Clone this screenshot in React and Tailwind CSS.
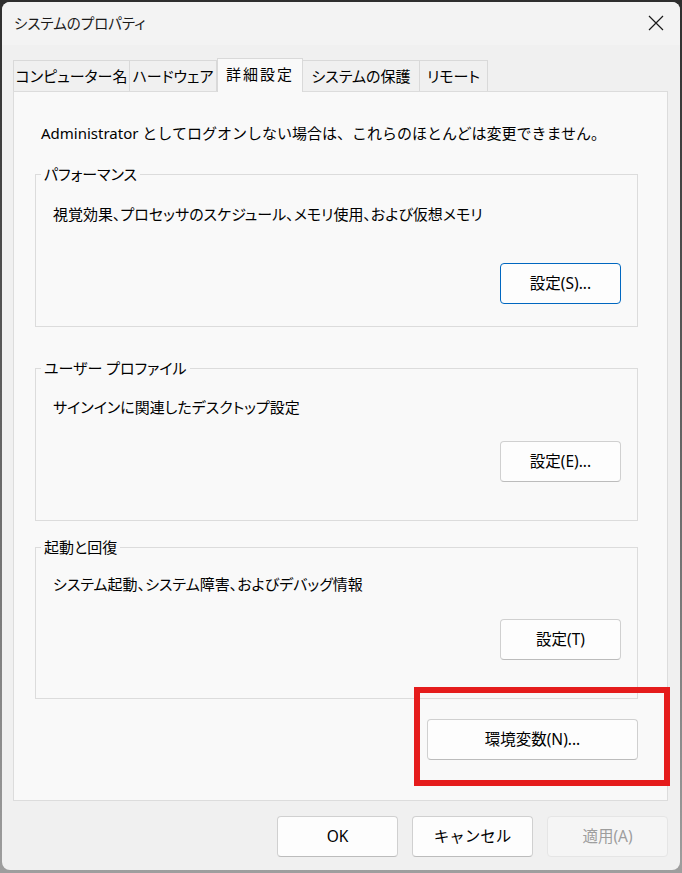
import React from 'react'

const font = { fontFamily: "'Noto Sans', 'Noto Sans CJK JP', sans-serif" }

const tabs = [
  { label: 'コンピューター名', w: 'w-[117px]' },
  { label: 'ハードウェア', w: 'w-[88px]' },
  { label: '詳細設定', w: 'w-[86px]', active: true },
  { label: 'システムの保護', w: 'w-[118px]' },
  { label: 'リモート', w: 'w-[69px]' },
]

const Button = ({ children, className = '', primary, disabled }) => (
  <button
    disabled={disabled}
    className={`h-[41px] w-[121px] rounded-[4px] border text-[15.5px] leading-none [font-feature-settings:normal] ${
      primary
        ? 'border-[#0067c0] bg-[#fdfdfd] text-black'
        : disabled
        ? 'border-[#e5e5e5] bg-[#f5f5f5] text-[#9d9d9d]'
        : 'border-[#d0d0d0] border-b-[#bcbcbc] bg-[#fdfdfd] text-black'
    } ${className}`}
  >
    {children}
  </button>
)

const GroupBox = ({ title, text, button, height, textTop, gap, primary }) => (
  <div className={`relative ml-[21px] mr-[29px] flex flex-col border border-[#dcdcdc] ${height} ${textTop}`}>
    {/* label sits over the top border */}
    <span className="absolute left-[5px] top-[-11px] bg-[#f9f9f9] px-[3px] text-[15px] leading-[20px] text-black">
      {title}
    </span>
    <div className="pl-[17px] text-[15px] leading-[20px] text-black">{text}</div>
    <div className={`flex justify-end pr-[16px] ${gap}`}>
      <Button primary={primary}>{button}</Button>
    </div>
  </div>
)

export default function App() {
  return (
    <div
      className="h-[873px] w-[682px] bg-linear-to-b from-[#2e2e2e] to-[#9e9e9e] pl-[2px] pt-[2px] [font-feature-settings:'palt']"
      style={font}
    >
      <div className="flex h-[868px] w-[678px] flex-col overflow-hidden rounded-[8px] bg-[#f0f0f0]">
        {/* title bar */}
        <div className="flex h-[43px] shrink-0 items-center justify-between bg-[#f3f3f3] pl-[12px] pr-[16px]">
          <span className="text-[14.5px] text-[#1a1a1a]">システムのプロパティ</span>
          <svg width="16" height="16" viewBox="0 0 16 16" className="mt-[-2px]">
            <path d="M1 1 L15 15 M15 1 L1 15" stroke="#1a1a1a" strokeWidth="1.2" fill="none" />
          </svg>
        </div>

        <div className="flex flex-col px-[11px]">
          {/* tabs */}
          <div className="mt-[13px] flex h-[33px] items-end">
            {tabs.map((t) => (
              <div
                key={t.label}
                className={`flex items-center justify-center whitespace-nowrap border border-[#d9d9d9] text-[15px] text-black ${t.w} ${
                  t.active
                    ? 'relative z-10 mb-[-1px] h-[34px] border-b-0 bg-[#f9f9f9] pb-[2px] tracking-[2px]'
                    : 'h-[31px] border-b-0 bg-[#f0f0f0] ml-[-1px] first:ml-0'
                }`}
              >
                {t.label}
              </div>
            ))}
          </div>

          {/* tab panel */}
          <div className="relative h-[710px] w-[655px] border border-[#dcdcdc] bg-[#f9f9f9]">
            <p className="pl-[27px] pt-[31px] text-[15px] leading-[20px] text-black [font-feature-settings:normal]">
              Administrator としてログオンしない場合は、これらのほとんどは変更できません。
            </p>

            <div className="mt-[31px]">
              <GroupBox
                title="パフォーマンス"
                text="視覚効果、プロセッサのスケジュール、メモリ使用、および仮想メモリ"
                button="設定(S)..."
                height="h-[153px]"
                textTop="pt-[29px]"
                gap="mt-[39px]"
                primary
              />
            </div>

            <div className="mt-[41px]">
              <GroupBox
                title="ユーザー プロファイル"
                text="サインインに関連したデスクトップ設定"
                button="設定(E)..."
                height="h-[153px]"
                textTop="pt-[28px]"
                gap="mt-[24px]"
              />
            </div>

            <div className="mt-[26px]">
              <GroupBox
                title="起動と回復"
                text="システム起動、システム障害、およびデバッグ情報"
                button="設定(T)"
                height="h-[152px]"
                textTop="pt-[26px]"
                gap="mt-[25px]"
              />
            </div>

            <div className="mt-[20px] flex justify-end pr-[29px]">
              <Button className="w-[211px]">環境変数(N)...</Button>
            </div>

            {/* red highlight annotation */}
            <div className="absolute left-[400px] top-[595px] h-[99px] w-[256px] border-[6px] border-[#e51c1c]" />
          </div>

          {/* dialog buttons */}
          <div className="mt-[15px] flex justify-end gap-[14px] pr-[1px]">
            <Button>OK</Button>
            <Button>キャンセル</Button>
            <Button disabled>適用(A)</Button>
          </div>
        </div>
      </div>
    </div>
  )
}
